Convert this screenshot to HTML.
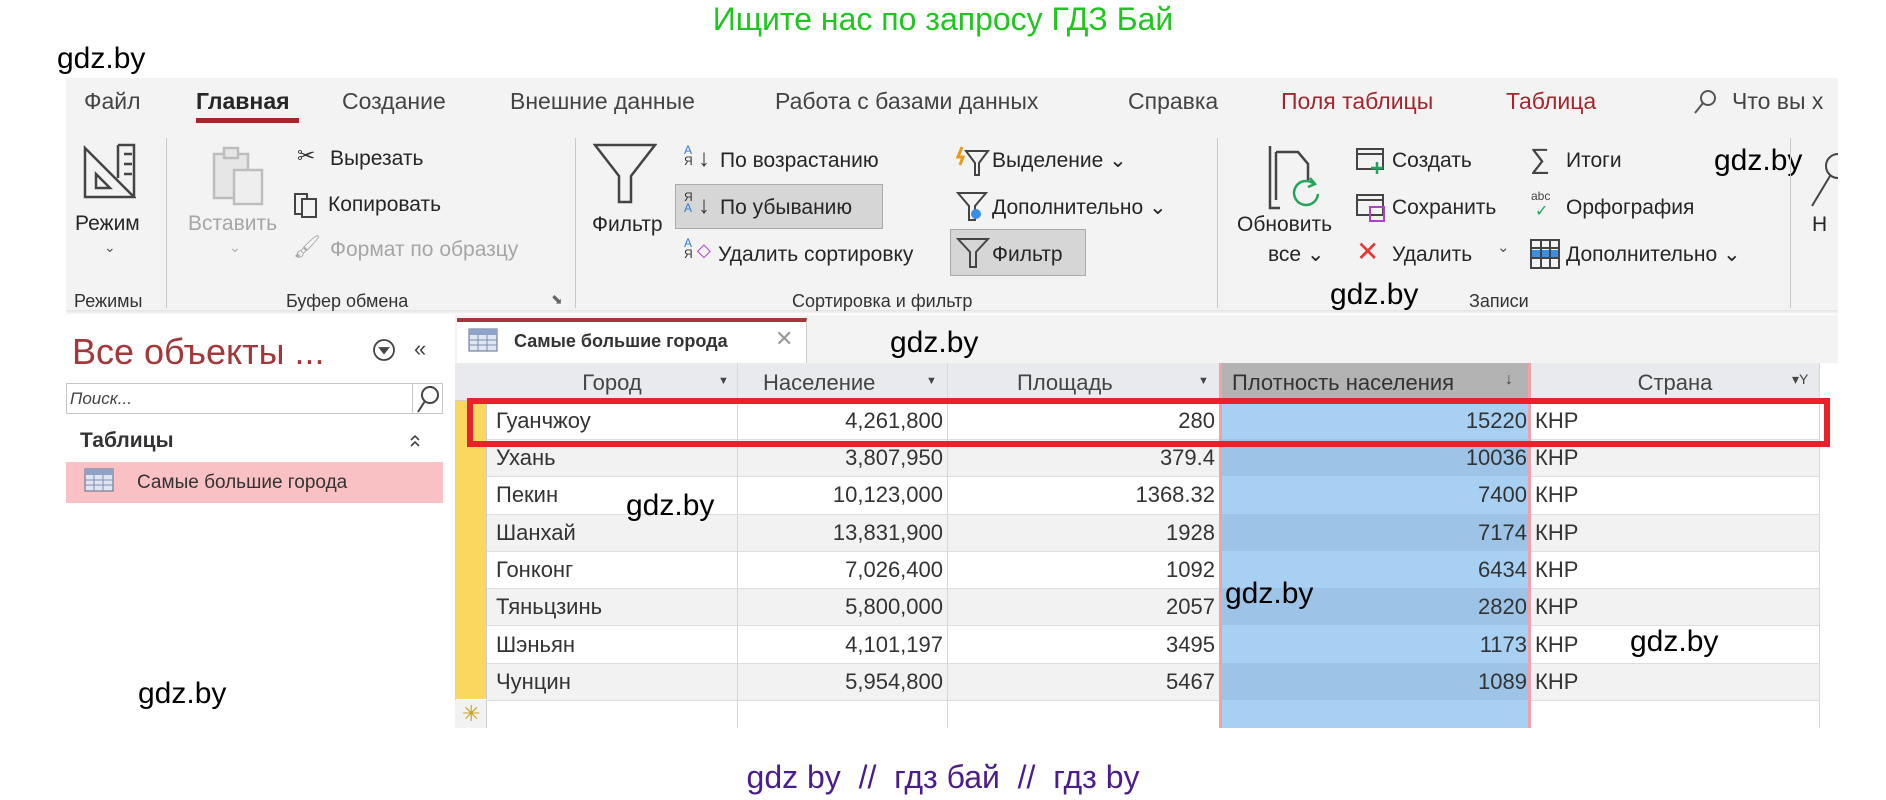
<!DOCTYPE html>
<html><head><meta charset="utf-8"><style>
*{margin:0;padding:0;box-sizing:border-box}
body{width:1886px;height:800px;background:#fff;position:relative;overflow:hidden;font-family:"Liberation Sans",sans-serif}
.t{position:absolute;white-space:nowrap;line-height:1}
.rb{font-size:21px;color:#262626}
.g{color:#a6a6a6}
.tab{font-size:23px;color:#444}
.wm{font-size:30px;color:#000}
.cell{position:absolute;font-size:22px;color:#333;line-height:37px;white-space:nowrap}
.sep{position:absolute;width:1px;background:#c8c8c8}
</style></head><body>

<div class="t" style="left:0;width:1886px;text-align:center;top:3px;font-size:32px;color:#1fc61f">Ищите нас по запросу ГДЗ Бай</div>
<div class="t wm" style="left:57px;top:44px">gdz.by</div>

<!-- ribbon -->
<div style="position:absolute;left:66px;top:78px;width:1772px;height:232px;background:#f3f3f3"></div>
<div style="position:absolute;left:66px;top:310px;width:1772px;height:4px;background:linear-gradient(#e2e2e2,#fafafa)"></div>
<div class="t tab" style="left:84px;top:90px">Файл</div>
<div class="t tab" style="left:196px;top:90px;font-weight:bold;color:#262626">Главная</div>
<div style="position:absolute;left:196px;top:118px;width:103px;height:5px;background:#a4262c"></div>
<div class="t tab" style="left:342px;top:90px">Создание</div>
<div class="t tab" style="left:510px;top:90px">Внешние данные</div>
<div class="t tab" style="left:775px;top:90px">Работа с базами данных</div>
<div class="t tab" style="left:1128px;top:90px">Справка</div>
<div class="t tab" style="left:1281px;top:90px;color:#a4262c">Поля таблицы</div>
<div class="t tab" style="left:1506px;top:90px;color:#a4262c">Таблица</div>
<svg style="position:absolute;left:1692px;top:88px" width="26" height="28"><circle cx="16" cy="10" r="7" fill="none" stroke="#555" stroke-width="2"/><line x1="11" y1="15" x2="3" y2="25" stroke="#555" stroke-width="2"/></svg>
<div class="t tab" style="left:1732px;top:90px">Что вы х</div>

<!-- Режим -->
<svg style="position:absolute;left:82px;top:142px" width="54" height="58" fill="none" stroke="#444" stroke-width="2.5"><path d="M3 6 L3 55 L52 55 Z"/><path d="M14 32 L14 46 L28 46 Z"/><path d="M36 3 L52 3 L52 55"/><path d="M36 3 L36 36"/><path d="M42 12h8M42 22h8M42 32h8"/></svg>
<div class="t rb" style="left:75px;top:213px">Режим</div>
<div class="t" style="left:104px;top:240px;font-size:14px;color:#555">⌄</div>
<div class="t" style="left:74px;top:292px;font-size:18px;color:#333">Режимы</div>
<div class="sep" style="left:166px;top:138px;height:170px"></div>

<!-- Буфер -->
<svg style="position:absolute;left:210px;top:146px" width="56" height="60" fill="none" stroke="#bdbdbd" stroke-width="2.5"><rect x="4" y="8" width="34" height="44" fill="#e6e6e6"/><rect x="14" y="2" width="14" height="10" fill="#e6e6e6"/><rect x="24" y="24" width="28" height="34" fill="#eee"/></svg>
<div class="t rb g" style="left:188px;top:213px">Вставить</div>
<div class="t" style="left:229px;top:240px;font-size:14px;color:#aaa">⌄</div>
<div class="t" style="left:297px;top:145px;font-size:22px;color:#333">✂</div>
<div class="t rb" style="left:330px;top:148px">Вырезать</div>
<svg style="position:absolute;left:293px;top:192px" width="28" height="28" fill="none" stroke="#444" stroke-width="2"><rect x="2" y="2" width="12" height="20"/><rect x="9" y="7" width="14" height="18" fill="#f3f3f3"/></svg>
<div class="t rb" style="left:328px;top:194px">Копировать</div>
<div class="t" style="left:293px;top:236px;font-size:22px;color:#aaa">🖌</div>
<div class="t rb g" style="left:330px;top:239px">Формат по образцу</div>
<div class="t" style="left:286px;top:292px;font-size:18px;color:#333">Буфер обмена</div>
<div class="t" style="left:551px;top:292px;font-size:14px;color:#666">⬊</div>
<div class="sep" style="left:575px;top:138px;height:170px"></div>

<!-- Сортировка -->
<svg style="position:absolute;left:593px;top:142px" width="64" height="64" fill="none" stroke="#444" stroke-width="2.5"><path d="M2 3 H62 L38 34 V60 H26 V34 Z"/></svg>
<div class="t rb" style="left:592px;top:214px">Фильтр</div>
<div class="t" style="left:684px;top:145px;font-size:12px;color:#2c7bd6;line-height:11px">А<br><span style="color:#333">Я</span></div>
<div class="t" style="left:698px;top:147px;font-size:24px;color:#333">↓</div>
<div class="t rb" style="left:720px;top:150px">По возрастанию</div>
<div style="position:absolute;left:675px;top:184px;width:208px;height:45px;background:#d6d6d6;border:1px solid #aaa"></div>
<div class="t" style="left:684px;top:192px;font-size:12px;color:#333;line-height:11px">Я<br><span style="color:#2c7bd6">А</span></div>
<div class="t" style="left:698px;top:194px;font-size:24px;color:#333">↓</div>
<div class="t rb" style="left:720px;top:197px">По убыванию</div>
<div class="t" style="left:684px;top:238px;font-size:12px;color:#2c7bd6;line-height:11px">А<br><span style="color:#333">Я</span></div>
<div class="t" style="left:697px;top:241px;font-size:18px;color:#b03fd0">◇</div>
<div class="t rb" style="left:718px;top:244px">Удалить сортировку</div>
<svg style="position:absolute;left:954px;top:145px" width="36" height="32" fill="none" stroke="#444" stroke-width="2"><path d="M8 2 L4 12 L9 12 L6 20" stroke="#e89a1b" stroke-width="3"/><path d="M12 6 H34 L25 18 V30 H21 V18 Z"/></svg>
<div class="t rb" style="left:992px;top:150px">Выделение ⌄</div>
<svg style="position:absolute;left:954px;top:190px" width="36" height="34" fill="none" stroke="#444" stroke-width="2"><path d="M4 3 H32 L21 16 V30 H15 V16 Z"/><circle cx="22" cy="24" r="5" fill="#3a8ee6" stroke="none"/></svg>
<div class="t rb" style="left:992px;top:197px">Дополнительно ⌄</div>
<div style="position:absolute;left:950px;top:229px;width:136px;height:47px;background:#d6d6d6;border:1px solid #aaa"></div>
<svg style="position:absolute;left:956px;top:236px" width="34" height="34" fill="none" stroke="#444" stroke-width="2"><path d="M2 3 H32 L20 16 V31 H14 V16 Z"/></svg>
<div class="t rb" style="left:992px;top:244px">Фильтр</div>
<div class="t" style="left:792px;top:292px;font-size:18px;color:#333">Сортировка и фильтр</div>
<div class="sep" style="left:1217px;top:138px;height:170px"></div>

<!-- Записи -->
<svg style="position:absolute;left:1266px;top:142px" width="60" height="76" fill="none" stroke="#444" stroke-width="2.5"><path d="M4 4 V66 H14"/><path d="M10 10 H32 L42 22 V38"/><path d="M10 10 V58"/><path d="M52 52 A12 12 0 1 1 48 42" stroke="#22a55a"/><path d="M44 36 L49 42 L42 45" stroke="#22a55a"/></svg>
<div class="t rb" style="left:1237px;top:214px">Обновить</div>
<div class="t rb" style="left:1268px;top:244px">все ⌄</div>
<svg style="position:absolute;left:1355px;top:147px" width="32" height="28" fill="none" stroke="#444" stroke-width="2"><rect x="2" y="2" width="26" height="20"/><path d="M2 7 H28"/><path d="M22 15 V27 M16 21 H28" stroke="#22a55a" stroke-width="2.5"/></svg>
<div class="t rb" style="left:1392px;top:150px">Создать</div>
<svg style="position:absolute;left:1355px;top:193px" width="32" height="30" fill="none" stroke="#444" stroke-width="2"><rect x="2" y="2" width="26" height="20"/><path d="M2 7 H28"/><rect x="15" y="14" width="14" height="14" stroke="#b03fd0"/></svg>
<div class="t rb" style="left:1392px;top:197px">Сохранить</div>
<div class="t" style="left:1356px;top:238px;font-size:28px;color:#e23a3a">✕</div>
<div class="t rb" style="left:1392px;top:244px">Удалить</div>
<div class="t" style="left:1497px;top:240px;font-size:15px;color:#555">⌄</div>
<div class="t" style="left:1530px;top:145px;font-size:28px;color:#444">∑</div>
<div class="t rb" style="left:1566px;top:150px">Итоги</div>
<div class="t" style="left:1531px;top:190px;font-size:12px;color:#444">abc</div>
<div class="t" style="left:1535px;top:204px;font-size:16px;color:#22a55a">✓</div>
<div class="t rb" style="left:1566px;top:197px">Орфография</div>
<svg style="position:absolute;left:1529px;top:238px" width="32" height="32" fill="none" stroke="#444" stroke-width="2"><rect x="2" y="2" width="28" height="28"/><rect x="3" y="12" width="26" height="7" fill="#3a8ee6" stroke="none"/><path d="M2 10H30M2 20H30M12 2V30M21 2V30"/></svg>
<div class="t rb" style="left:1566px;top:244px">Дополнительно ⌄</div>
<div class="t" style="left:1469px;top:292px;font-size:18px;color:#333">Записи</div>
<div class="t wm" style="left:1714px;top:146px">gdz.by</div>
<div class="t wm" style="left:1330px;top:280px">gdz.by</div>
<div class="sep" style="left:1790px;top:138px;height:170px"></div>
<svg style="position:absolute;left:1810px;top:148px" width="28" height="70" fill="none" stroke="#444" stroke-width="2"><circle cx="28" cy="18" r="12"/><path d="M20 28 L2 58"/></svg>
<div class="t rb" style="left:1812px;top:214px">Н</div>

<!-- nav pane -->
<div class="t" style="left:72px;top:334px;font-size:36px;color:#a4373a">Все объекты ...</div>
<svg style="position:absolute;left:372px;top:338px" width="24" height="24" fill="none" stroke="#444" stroke-width="1.8"><circle cx="12" cy="12" r="10"/><path d="M8 10 L12 15 L16 10 Z" fill="#444"/></svg>
<div class="t" style="left:414px;top:338px;font-size:22px;color:#444">«</div>
<div style="position:absolute;left:66px;top:383px;width:377px;height:31px;border:1px solid #c6c6c6;background:#fff"></div>
<div style="position:absolute;left:412px;top:383px;width:1px;height:31px;background:#c6c6c6"></div>
<div class="t" style="left:70px;top:390px;font-size:17px;font-style:italic;color:#444">Поиск...</div>
<svg style="position:absolute;left:414px;top:384px" width="28" height="30" fill="none" stroke="#444" stroke-width="2"><circle cx="16" cy="11" r="8"/><path d="M11 17 L4 28"/></svg>
<div class="t" style="left:80px;top:430px;font-size:21px;color:#333;font-weight:bold">Таблицы</div>
<svg style="position:absolute;left:408px;top:432px" width="14" height="18" fill="none" stroke="#444" stroke-width="1.6"><path d="M3 8 L7 4 L11 8 M3 14 L7 10 L11 14"/></svg>
<div style="position:absolute;left:66px;top:462px;width:377px;height:41px;background:#f9c1c4"></div>
<svg style="position:absolute;left:84px;top:468px" width="30" height="24"><rect x="1" y="1" width="28" height="22" fill="#dfe6f2" stroke="#5a6a8c"/><rect x="1" y="1" width="28" height="6" fill="#8fa3c8"/><path d="M1 12H29M1 17H29M10 7V23M19 7V23" stroke="#7b8db0"/></svg>
<div class="t" style="left:137px;top:473px;font-size:19px;color:#333">Самые большие города</div>
<div class="t wm" style="left:138px;top:679px">gdz.by</div>

<!-- table area -->
<div style="position:absolute;left:455px;top:315px;width:1383px;height:48px;background:#f3f3f3"></div>
<div style="position:absolute;left:457px;top:318px;width:350px;height:46px;background:#fff;border-top:4px solid #a4373a;border-right:1px solid #ccc"></div>
<svg style="position:absolute;left:468px;top:328px" width="30" height="24"><rect x="1" y="1" width="28" height="22" fill="#dfe6f2" stroke="#5a6a8c"/><rect x="1" y="1" width="28" height="6" fill="#8fa3c8"/><path d="M1 12H29M1 17H29M10 7V23M19 7V23" stroke="#7b8db0"/></svg>
<div class="t" style="left:514px;top:332px;font-size:18px;font-weight:bold;color:#333">Самые большие города</div>
<div class="t" style="left:775px;top:328px;font-size:22px;color:#999">✕</div>
<div class="t wm" style="left:890px;top:328px">gdz.by</div>

<div style="position:absolute;left:455px;top:363px;width:1364px;height:365px;background:#fff;border-left:1px solid #ccc"></div>
<div style="position:absolute;left:455px;top:363px;width:1364px;height:38px;background:#e8eaee;border-bottom:1px solid #ccc"></div>
<div style="position:absolute;left:1219px;top:363px;width:312px;height:38px;background:#b3b3b3;border-left:3px solid #f1a2a8;border-right:3px solid #f1a2a8"></div>

<div style="position:absolute;left:487px;top:439px;width:1332px;height:37px;background:#f2f2f2"></div>
<div style="position:absolute;left:487px;top:514px;width:1332px;height:37px;background:#f2f2f2"></div>
<div style="position:absolute;left:487px;top:588px;width:1332px;height:37px;background:#f2f2f2"></div>
<div style="position:absolute;left:487px;top:663px;width:1332px;height:37px;background:#f2f2f2"></div>
<div style="position:absolute;left:455px;top:439px;width:1364px;height:1px;background:#dadde2;box-shadow:0 37px 0 #dadde2,0 75px 0 #dadde2,0 112px 0 #dadde2,0 149px 0 #dadde2,0 186px 0 #dadde2,0 224px 0 #dadde2,0 261px 0 #dadde2"></div>
<div style="position:absolute;left:1219px;top:401px;width:312px;height:327px;background:#a8d0f2;border-left:3px solid #f1a2a8;border-right:3px solid #f1a2a8"></div>
<div style="position:absolute;left:1222px;top:439px;width:306px;height:37px;background:#9dc3e6"></div>
<div style="position:absolute;left:1222px;top:514px;width:306px;height:37px;background:#9dc3e6"></div>
<div style="position:absolute;left:1222px;top:588px;width:306px;height:37px;background:#9dc3e6"></div>
<div style="position:absolute;left:1222px;top:663px;width:306px;height:37px;background:#9dc3e6"></div>
<div style="position:absolute;left:455px;top:401px;width:32px;height:298px;background:#fcd75f;border-right:1px solid #ccc"></div>
<div style="position:absolute;left:455px;top:700px;width:32px;height:28px;background:#f2f2f2;border-right:1px solid #ccc"></div>
<div class="t" style="left:462px;top:703px;font-size:22px;color:#c9a020">✳</div>
<div class="sep" style="left:737px;top:363px;height:365px;background:#d4d7dc"></div>
<div class="sep" style="left:947px;top:363px;height:365px;background:#d4d7dc"></div>
<div class="sep" style="left:1819px;top:363px;height:365px;background:#d4d7dc"></div>

<div class="t" style="left:487px;width:250px;text-align:center;top:372px;font-size:22px;color:#444">Город</div>
<div class="t" style="left:718px;top:376px;font-size:11px;color:#444">▼</div>
<div class="t" style="left:763px;top:372px;font-size:22px;color:#444">Население</div>
<div class="t" style="left:926px;top:376px;font-size:11px;color:#444">▼</div>
<div class="t" style="left:1017px;top:372px;font-size:22px;color:#444">Площадь</div>
<div class="t" style="left:1198px;top:376px;font-size:11px;color:#444">▼</div>
<div class="t" style="left:1232px;top:372px;font-size:22px;color:#333">Плотность населения</div>
<div class="t" style="left:1505px;top:372px;font-size:16px;color:#444">↓</div>
<div class="t" style="left:1531px;width:288px;text-align:center;top:372px;font-size:22px;color:#444">Страна</div>
<div class="t" style="left:1792px;top:372px;font-size:14px;color:#444">▾Y</div>

<div style="position:absolute;left:0;top:402px">
<div class="cell" style="left:496px;top:0">Гуанчжоу</div><div class="cell" style="left:737px;width:206px;text-align:right;top:0">4,261,800</div><div class="cell" style="left:947px;width:268px;text-align:right;top:0">280</div><div class="cell" style="left:1219px;width:308px;text-align:right;top:0">15220</div><div class="cell" style="left:1535px;top:0">КНР</div>
<div class="cell" style="left:496px;top:37px">Ухань</div><div class="cell" style="left:737px;width:206px;text-align:right;top:37px">3,807,950</div><div class="cell" style="left:947px;width:268px;text-align:right;top:37px">379.4</div><div class="cell" style="left:1219px;width:308px;text-align:right;top:37px">10036</div><div class="cell" style="left:1535px;top:37px">КНР</div>
<div class="cell" style="left:496px;top:74px">Пекин</div><div class="cell" style="left:737px;width:206px;text-align:right;top:74px">10,123,000</div><div class="cell" style="left:947px;width:268px;text-align:right;top:74px">1368.32</div><div class="cell" style="left:1219px;width:308px;text-align:right;top:74px">7400</div><div class="cell" style="left:1535px;top:74px">КНР</div>
<div class="cell" style="left:496px;top:112px">Шанхай</div><div class="cell" style="left:737px;width:206px;text-align:right;top:112px">13,831,900</div><div class="cell" style="left:947px;width:268px;text-align:right;top:112px">1928</div><div class="cell" style="left:1219px;width:308px;text-align:right;top:112px">7174</div><div class="cell" style="left:1535px;top:112px">КНР</div>
<div class="cell" style="left:496px;top:149px">Гонконг</div><div class="cell" style="left:737px;width:206px;text-align:right;top:149px">7,026,400</div><div class="cell" style="left:947px;width:268px;text-align:right;top:149px">1092</div><div class="cell" style="left:1219px;width:308px;text-align:right;top:149px">6434</div><div class="cell" style="left:1535px;top:149px">КНР</div>
<div class="cell" style="left:496px;top:186px">Тяньцзинь</div><div class="cell" style="left:737px;width:206px;text-align:right;top:186px">5,800,000</div><div class="cell" style="left:947px;width:268px;text-align:right;top:186px">2057</div><div class="cell" style="left:1219px;width:308px;text-align:right;top:186px">2820</div><div class="cell" style="left:1535px;top:186px">КНР</div>
<div class="cell" style="left:496px;top:224px">Шэньян</div><div class="cell" style="left:737px;width:206px;text-align:right;top:224px">4,101,197</div><div class="cell" style="left:947px;width:268px;text-align:right;top:224px">3495</div><div class="cell" style="left:1219px;width:308px;text-align:right;top:224px">1173</div><div class="cell" style="left:1535px;top:224px">КНР</div>
<div class="cell" style="left:496px;top:261px">Чунцин</div><div class="cell" style="left:737px;width:206px;text-align:right;top:261px">5,954,800</div><div class="cell" style="left:947px;width:268px;text-align:right;top:261px">5467</div><div class="cell" style="left:1219px;width:308px;text-align:right;top:261px">1089</div><div class="cell" style="left:1535px;top:261px">КНР</div>
</div>

<div style="position:absolute;left:467px;top:398px;width:1363px;height:49px;border:6px solid #e8212b"></div>

<div class="t wm" style="left:626px;top:491px">gdz.by</div>
<div class="t wm" style="left:1225px;top:579px">gdz.by</div>
<div class="t wm" style="left:1630px;top:627px">gdz.by</div>

<div class="t" style="left:0;width:1886px;text-align:center;top:761px;font-size:32px;color:#4b1c8c">gdz by &nbsp;//&nbsp; гдз бай &nbsp;//&nbsp; гдз by</div>
</body></html>
